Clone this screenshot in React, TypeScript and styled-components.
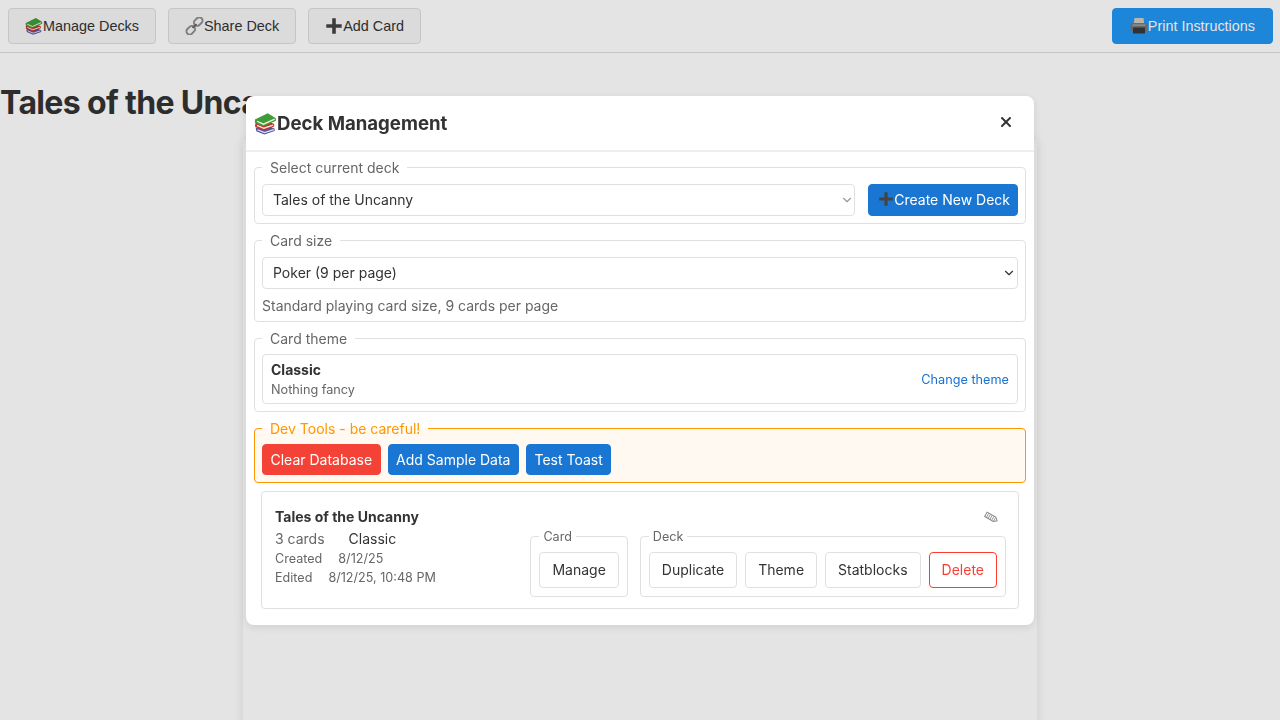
// React DeckManagement
import React from "react";
import styled, { createGlobalStyle } from "styled-components";
import { ChevronDown, X } from "lucide-react";

const GlobalStyle = createGlobalStyle`
  html, body {
    margin: 0;
    height: 100%;
    overflow: hidden;
    background: white;
    font-family: Inter, "Liberation Sans", sans-serif;
    color: #333;
  }
  * {
    box-sizing: border-box;
  }
`;

const Toolbar = styled.div`
  height: 53px;
  display: flex;
  align-items: center;
  gap: 12px;
  padding: 0 7px 1px 8px;
  background: #fff;
  border-bottom: 1px solid #ddd;
`;

const ToolButton = styled.button<{ $primary?: boolean }>`
  height: 36px;
  display: flex;
  align-items: center;
  padding: 0 ${(p) => (p.$primary ? 17 : 16)}px;
  border-radius: 4px;
  border: 1px solid ${(p) => (p.$primary ? "#2196f3" : "#ddd")};
  background: ${(p) => (p.$primary ? "#2196f3" : "#f5f5f5")};
  color: ${(p) => (p.$primary ? "#fff" : "#333")};
  font-family: "Liberation Sans", Arial, sans-serif;
  font-size: 14.4px;
  margin-left: ${(p) => (p.$primary ? "auto" : "0")};
`;

const PageTitle = styled.h1`
  margin: 31px 0 18px;
  font-size: 32px;
  line-height: 38px;
  font-weight: 700;
  letter-spacing: -0.64px;
  color: #333;
`;

const Paper = styled.div`
  width: 794px;
  height: 1123px;
  margin: 0 auto;
  background: #fff;
  box-shadow: 0 0 10px rgba(0, 0, 0, 0.1);
`;

const Overlay = styled.div`
  position: fixed;
  inset: 0;
  display: flex;
  align-items: center;
  justify-content: center;
  background: rgba(0, 0, 0, 0.106);
`;

const Modal = styled.div`
  width: 788px;
  margin-top: 1px;
  background: #fff;
  border-radius: 8px;
  box-shadow: 0 2px 10px rgba(0, 0, 0, 0.1);
`;

const ModalHeader = styled.div`
  height: 56px;
  display: flex;
  align-items: center;
  justify-content: space-between;
  padding: 0 20px 0 8px;
  border-bottom: 2px solid #eee;
`;

const ModalTitle = styled.h2`
  margin: 0;
  display: flex;
  align-items: center;
  font-size: 18.6px;
  font-weight: 700;
  color: #333;
`;

const CloseButton = styled.button`
  display: flex;
  padding: 0;
  margin-bottom: 2px;
  border: none;
  background: none;
  color: #333;
`;

const ModalBody = styled.div`
  display: flex;
  flex-direction: column;
  gap: 8px;
  padding: 7px 8px 16px;
`;

const Group = styled.fieldset<{ $warn?: boolean; $tight?: boolean }>`
  min-width: 0;
  margin: 0;
  padding: ${(p) => (p.$tight ? 7 : 8)}px 7px 7px;
  border: 1px solid ${(p) => (p.$warn ? "#ff9800" : "#e0e0e0")};
  border-radius: 4px;
  background: ${(p) => (p.$warn ? "#fff9f2" : "transparent")};
`;

const GroupLabel = styled.legend<{ $warn?: boolean }>`
  padding: 0 8px;
  font-size: 14px;
  line-height: 17px;
  color: ${(p) => (p.$warn ? "#ff9800" : "#666")};
`;

const Row = styled.div<{ $gap: number }>`
  display: flex;
  align-items: center;
  gap: ${(p) => p.$gap}px;
`;

const SelectWrap = styled.div`
  position: relative;
  flex: 1;
  display: flex;
`;

const Select = styled.select`
  width: 100%;
  height: 32px;
  padding: 0 10px 2px;
  appearance: none;
  border: 1px solid #e0e0e0;
  border-radius: 4px;
  background: #fff;
  font-family: Inter, sans-serif;
  font-size: 14px;
  color: #333;
`;

const Chevron = styled(ChevronDown)<{ $muted?: boolean }>`
  position: absolute;
  right: ${(p) => (p.$muted ? 1 : 2)}px;
  top: 9px;
  color: ${(p) => (p.$muted ? "#999" : "#333")};
  pointer-events: none;
`;

const SolidButton = styled.button<{ $danger?: boolean; $tall?: boolean }>`
  height: ${(p) => (p.$tall ? 32 : 31)}px;
  display: flex;
  align-items: center;
  flex-shrink: 0;
  padding: ${(p) => (p.$tall ? "0 7px 2px 9px" : "0 7.5px")};
  border: 1px solid ${(p) => (p.$danger ? "#f44336" : "#1976d2")};
  border-radius: 4px;
  background: ${(p) => (p.$danger ? "#f44336" : "#1976d2")};
  color: #fff;
  font-family: Inter, sans-serif;
  font-size: 14px;
`;

const HelpText = styled.div`
  margin-top: 8px;
  font-size: 14px;
  line-height: 17px;
  color: #666;
`;

const ThemeBox = styled.div`
  height: 50px;
  display: flex;
  align-items: center;
  justify-content: space-between;
  padding: 0 8px;
  border: 1px solid #e0e0e0;
  border-radius: 4px;
`;

const ThemeName = styled.div`
  font-size: 14px;
  line-height: 17px;
  font-weight: 700;
  color: #333;
`;

const ThemeNote = styled.div`
  margin-top: 4px;
  font-size: 12.7px;
  line-height: 16px;
  color: #666;
`;

const ChangeLink = styled.a`
  font-size: 12.7px;
  color: #1872d0;
`;

const DeckCard = styled.div`
  position: relative;
  display: flex;
  justify-content: space-between;
  align-items: flex-end;
  height: 118px;
  margin: 0 7px;
  padding: 0 12px 11px 13px;
  border: 1px solid #e0e0e0;
  border-radius: 4px;
`;

const DeckInfo = styled.div`
  align-self: flex-start;
  padding-top: 16px;
`;

const DeckName = styled.div`
  font-size: 14px;
  line-height: 17px;
  font-weight: 700;
  color: #333;
`;

const MetaRow = styled.div<{ $small?: boolean; $gap: number }>`
  display: flex;
  gap: ${(p) => p.$gap}px;
  margin-top: ${(p) => (p.$small ? 2 : 5)}px;
  font-size: ${(p) => (p.$small ? 12.6 : 14)}px;
  line-height: 17px;
  color: #666;
`;

const CreatedRow = styled(MetaRow)`
  margin-top: 3px;
`;

const ThemeTag = styled.span`
  color: #333;
`;

const ActionGroups = styled.div`
  display: flex;
  gap: 12px;
`;

const ActionGroup = styled.fieldset`
  display: flex;
  gap: 8px;
  min-width: 0;
  margin: 0;
  padding: 8px;
  border: 1px solid #e0e0e0;
  border-radius: 4px;
`;

const ActionLabel = styled.legend`
  padding: 0 4px;
  font-size: 12.6px;
  line-height: 15px;
  color: #666;
`;

const OutlineButton = styled.button<{ $danger?: boolean }>`
  height: 36px;
  padding: 0 12px 2px;
  border: 1px solid ${(p) => (p.$danger ? "#ff3b30" : "#e0e0e0")};
  border-radius: 4px;
  background: #fff;
  color: ${(p) => (p.$danger ? "#ff3b30" : "#333")};
  font-family: Inter, sans-serif;
  font-size: 14px;
`;

const EditButton = styled.button`
  position: absolute;
  top: 19px;
  right: 19px;
  display: flex;
  padding: 0;
  border: none;
  background: none;
`;

function BooksIcon({ size = 18 }: { size?: number }) {
  return (
    <svg width={size} height={size} viewBox="0 0 20 20">
      <path d="M1.5 14l9-3 7.5 3.6v2L9 19.6 2 16.8z" fill="#55559f" />
      <path d="M3 15.4l6.2 2.5 8-2.6" fill="none" stroke="#e8e6ee" strokeWidth="1" />
      <path d="M1 10l9-3 7.5 3.4v2.2L8.5 16 1 13z" fill="#c9302a" />
      <path d="M2.6 11.6l6 2.5 8-2.6" fill="none" stroke="#f3ebdd" strokeWidth="1.1" />
      <path d="M.8 6.6L12 1l7 4.4v2.2L8 12.6.8 9.4z" fill="#3f9c38" />
      <path d="M2.6 8l5.6 2.6 9.8-4.4" fill="none" stroke="#eef4e6" strokeWidth="1.1" />
    </svg>
  );
}

function LinkIcon() {
  return (
    <svg width="19" height="18" viewBox="0 0 19 18" fill="none">
      <g stroke="#8f8f8f" strokeWidth="2">
        <rect x="8.5" y="1.4" width="9.5" height="6.4" rx="3.2" transform="rotate(-45 13.2 4.6)" />
        <rect x="1" y="10" width="9.5" height="6.4" rx="3.2" transform="rotate(-45 5.8 13.2)" />
      </g>
      <path d="M7.5 11l4-4" stroke="#5e5e5e" strokeWidth="1.6" />
    </svg>
  );
}

function PrinterIcon() {
  return (
    <svg width="18" height="18" viewBox="0 0 18 18">
      <path d="M4.5 1h9l.8 6H3.7z" fill="#cfcac2" />
      <rect x="0.5" y="6" width="17" height="8.5" rx="2" fill="#75767a" />
      <rect x="2.5" y="7.5" width="13" height="1.2" fill="#a8a9ac" />
      <rect x="3" y="10.5" width="12" height="6" rx="0.5" fill="#37383b" />
    </svg>
  );
}

function PlusIcon({ size = 16 }: { size?: number }) {
  return (
    <svg width={size} height={size} viewBox="0 0 14 14">
      <path d="M5.6 1h2.8v4.6H13v2.8H8.4V13H5.6V8.4H1V5.6h4.6z" fill="#444" />
    </svg>
  );
}

function PencilIcon() {
  return (
    <svg width="15" height="13" viewBox="0 0 15 13" fill="none" stroke="#8a8a8a" strokeWidth="1">
      <g transform="rotate(30 7.5 6.5)">
        <path d="M1 4h10l3 2.5-3 2.5H1z" />
        <path d="M3 4v5M5 4v5M7 4v5M9 4v5M11 4v5" strokeWidth="0.8" />
      </g>
    </svg>
  );
}

export default function App() {
  return (
    <>
      <GlobalStyle />
      <Toolbar>
        <ToolButton>
          <BooksIcon />
          Manage Decks
        </ToolButton>
        <ToolButton>
          <LinkIcon />
          Share Deck
        </ToolButton>
        <ToolButton>
          <PlusIcon size={18} />
          Add Card
        </ToolButton>
        <ToolButton $primary>
          <PrinterIcon />
          Print Instructions
        </ToolButton>
      </Toolbar>
      <PageTitle>Tales of the Uncanny</PageTitle>
      <Paper />
      <Overlay>
        <Modal>
          <ModalHeader>
            <ModalTitle>
              <BooksIcon size={23} />
              Deck Management
            </ModalTitle>
            <CloseButton>
              <X size={16} strokeWidth={3} />
            </CloseButton>
          </ModalHeader>
          <ModalBody>
            <Group>
              <GroupLabel>Select current deck</GroupLabel>
              <Row $gap={13}>
                <SelectWrap>
                  <Select defaultValue="tales">
                    <option value="tales">Tales of the Uncanny</option>
                  </Select>
                  <Chevron size={14} $muted />
                </SelectWrap>
                <SolidButton $tall>
                  <PlusIcon />
                  Create New Deck
                </SolidButton>
              </Row>
            </Group>
            <Group>
              <GroupLabel>Card size</GroupLabel>
              <SelectWrap>
                <Select defaultValue="poker">
                  <option value="poker">Poker (9 per page)</option>
                </Select>
                <Chevron size={14} />
              </SelectWrap>
              <HelpText>Standard playing card size, 9 cards per page</HelpText>
            </Group>
            <Group $tight>
              <GroupLabel>Card theme</GroupLabel>
              <ThemeBox>
                <div>
                  <ThemeName>Classic</ThemeName>
                  <ThemeNote>Nothing fancy</ThemeNote>
                </div>
                <ChangeLink>Change theme</ChangeLink>
              </ThemeBox>
            </Group>
            <Group $warn $tight>
              <GroupLabel $warn>Dev Tools - be careful!</GroupLabel>
              <Row $gap={7}>
                <SolidButton $danger>Clear Database</SolidButton>
                <SolidButton>Add Sample Data</SolidButton>
                <SolidButton>Test Toast</SolidButton>
              </Row>
            </Group>
            <DeckCard>
              <DeckInfo>
                <DeckName>Tales of the Uncanny</DeckName>
                <MetaRow $gap={24}>
                  <span>3 cards</span>
                  <ThemeTag>Classic</ThemeTag>
                </MetaRow>
                <CreatedRow $small $gap={16}>
                  <span>Created</span>
                  <span>8/12/25</span>
                </CreatedRow>
                <MetaRow $small $gap={16}>
                  <span>Edited</span>
                  <span>8/12/25, 10:48 PM</span>
                </MetaRow>
              </DeckInfo>
              <EditButton>
                <PencilIcon />
              </EditButton>
              <ActionGroups>
                <ActionGroup>
                  <ActionLabel>Card</ActionLabel>
                  <OutlineButton>Manage</OutlineButton>
                </ActionGroup>
                <ActionGroup>
                  <ActionLabel>Deck</ActionLabel>
                  <OutlineButton>Duplicate</OutlineButton>
                  <OutlineButton>Theme</OutlineButton>
                  <OutlineButton>Statblocks</OutlineButton>
                  <OutlineButton $danger>Delete</OutlineButton>
                </ActionGroup>
              </ActionGroups>
            </DeckCard>
          </ModalBody>
        </Modal>
      </Overlay>
    </>
  );
}
